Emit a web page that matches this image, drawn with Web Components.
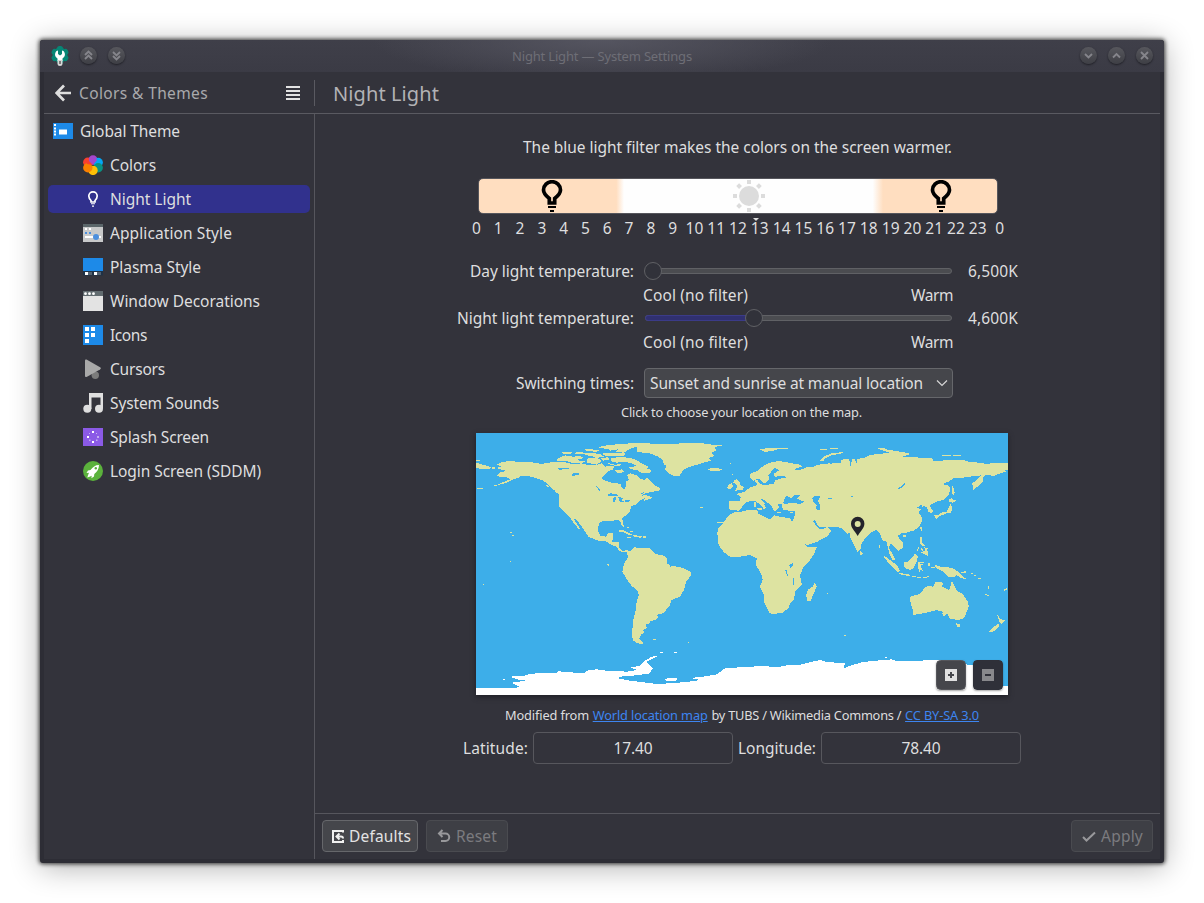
<!DOCTYPE html>
<html lang="en">
<head>
<meta charset="utf-8">
<title>Night Light — System Settings</title>
<style>
html,body{margin:0;background:#fff;height:100%;overflow:hidden}
body{font:15.5px/20px "Noto Sans",sans-serif;color:#dededf}
</style>
</head>
<body>
<settings-window></settings-window>
<script>
const shadow = (el, html) => { el.attachShadow({mode:'open'}).innerHTML = html; };

const ICONS = {
  theme:`<path fill="#1d8ae8" d="M0 2h20v16H0z"/><path fill="#fff" d="M1 3h2v2H1zM1 6.500h2v2H1zM1 9.500h2v2H1zM1 12.500h2v2H1zM6 8.500h8v5H6z"/>`,
  colors:`<circle cx="4.800" cy="7.300" r="4.700" fill="#f9402f"/><circle cx="10" cy="5" r="4.700" fill="#a546cc"/><circle cx="15.200" cy="7.500" r="4.700" fill="#04a6f5"/><circle cx="15.200" cy="12.800" r="4.700" fill="#089385"/><circle cx="10" cy="15.400" r="4.700" fill="#fec006"/><circle cx="4.800" cy="12.800" r="4.700" fill="#fb8100"/><path fill="#f9402f" d="M2 4l6-1 2 7-6-1z"/><path fill="#a546cc" d="M6 3h7l1 2-4 5-4-4z"/>`,
  bulb:`<path fill="none" stroke="#fff" stroke-width="1.700" d="M8 13v-1.500C6.500 10 5.800 9 5.800 7a4.200 4.200 0 0 1 8.400 0c0 2-.7 3-2.200 4.500V13z"/><path fill="#fff" d="M8 14.300h4v1H8zM9 16.500h2v1.200H9z"/>`,
  app:`<path fill="#c8c9ca" d="M0 1h20v18H0z"/><path fill="#5b666a" d="M0 1h20v3H0z"/><path fill="#fff" d="M2 5h2v2H2zM6 5h2v2H6zM2 13h16v2H2z"/><path fill="#4c8fdd" d="M2 9h2v2H2zM6 9h2v2H6z"/><circle cx="13" cy="14" r="3" fill="#4c8fdd"/>`,
  plasma:`<path fill="#1d8ae8" d="M0 1h20v13H0z"/><path fill="#1e3247" d="M0 14h20v4.500H0z"/><path fill="#fff" d="M2 15h3v3H2zM11 15h3v3h-3z"/><path fill="#53616f" d="M5 15h4v3H5zM14 15h4v3h-4z"/>`,
  deco:`<path fill="#e3e3e3" d="M0 0h20v20H0z"/><path fill="#626c70" d="M0 0h20v5H0z"/><circle cx="2.500" cy="2.700" r="1.400" fill="#fff"/><circle cx="6.500" cy="2.700" r="1.400" fill="#fff"/><circle cx="10.500" cy="2.700" r="1.400" fill="#fff"/>`,
  icons:`<path fill="#1d8ae8" d="M0 0h20v20H0z"/><path fill="#fff" d="M2 2h4v4H2zM8 2h4v4H8zM2 8h4v4H2zM8 8h4v4H8zM2 14h4v4H2z"/>`,
  cursor:`<circle cx="12.300" cy="16.300" r="3.700" fill="#7b7b7b"/><path fill="#a9a9a9" d="M2 1.500Q2 0 3.500 0.500L17.500 8.500Q18.500 9.500 17 10.500L4 17.800Q2 18.500 2 17z"/>`,
  music:`<path fill="#dfdfdf" d="M6 0h14v15.500h-2.500V4.500h-9V16H6z"/><circle cx="4.300" cy="15.700" r="4" fill="#dfdfdf"/><circle cx="16" cy="15.700" r="4" fill="#dfdfdf"/>`,
  splash:`<path fill="#8b5ae6" d="M0 1h20v18H0z"/><path fill="#fff" d="M9 4h2v2H9zM9 14h2v2H9zM4 9h2v2H4z"/><path fill="#c4acf2" d="M14 9h2v2h-2zM6 6h1v1H6zM13 6h1v1h-1zM6 12.500h1.500V14H6zM13 12.500h1.500V14H13z"/>`,
  login:`<circle cx="10" cy="10" r="10" fill="#5bb23c"/><path fill="#fff" d="M16 4c-4 0-6 2-8.500 5L5 9.500 3.500 12l2.500-.3-1 2.600-.7 2.200 2.200-.8 2.200-1-.3 2.600 2.600-1.700.3-2.600C14 11 16 8 16 4z"/><circle cx="12.800" cy="7.300" r="1.200" fill="#5bb23c"/>`
};

class SideItem extends HTMLElement{
  connectedCallback(){
    shadow(this,`<style>
    :host{display:flex;align-items:center;height:28px;margin:0 4px;padding-left:35px;border-radius:5px}
    :host([top]){padding-left:5px}
    :host([selected]){background:#31318d}
    svg{width:20px;height:20px;margin-right:7px;flex:none}
    </style><svg viewBox="0 0 20 20">${ICONS[this.getAttribute('icon')]}</svg><slot></slot>`);
  }
}

class RoundButton extends HTMLElement{
  connectedCallback(){
    const p={up2:'M5 8l3.500-3.500L12 8M5 12l3.500-3.500L12 12',down2:'M5 5l3.500 3.500L12 5M5 9l3.500 3.500L12 9',down:'M5 7l3.500 3.500L12 7',up:'M5 10.500L8.500 7l3.500 3.500',close:'M5 5l7 7M12 5l-7 7'}[this.getAttribute('glyph')];
    shadow(this,`<style>:host{display:block;width:17px;height:17px;border-radius:50%;background:linear-gradient(#57575d,#3e3f45);box-shadow:0 1px 2px #1e1e24}
    svg{display:block}</style><svg width="17" height="17"><path d="${p}" fill="none" stroke="#85858b" stroke-width="1.900"/></svg>`);
  }
}

class TitleBar extends HTMLElement{
  connectedCallback(){
    shadow(this,`<style>
    :host{display:grid;grid-template-columns:1fr auto 1fr;align-items:center;height:32px;background:radial-gradient(ellipse 230px 42px at 50% 0,#555560,rgba(85,85,96,0)),linear-gradient(#3f3f49,#3b3b45);font-size:13px;color:#6e6e76}
    .l,.r{display:flex;align-items:center;gap:11px}
    .l{padding-left:10px}.r{justify-content:flex-end;padding-right:11.500px}
    .l svg{margin-right:-1.500px}
    round-button{margin-top:-1px}
    </style><div class="l"><svg width="20" height="22" viewBox="0 0 20 22"><g fill="#078675"><circle cx="10" cy="10" r="7.500"/><rect x="7" y="1" width="6" height="18" rx="2.500"/><rect x="7" y="1" width="6" height="18" rx="2.500" transform="rotate(60 10 10)"/><rect x="7" y="1" width="6" height="18" rx="2.500" transform="rotate(120 10 10)"/></g><path fill="#fff" d="M6.500 6C4 9 5 12 7.500 13.500V16h5v-2.500C15 12 16 9 13.500 6L12 5.500V9l-2 1.500L8 9V5.500z"/><path fill="#d8d8d8" d="M7.500 15h5v4q0 2-2.500 2t-2.500-2z"/><path fill="#555" d="M9.300 16h1.400v3H9.300z"/></svg>
    <round-button glyph="up2"></round-button><round-button glyph="down2"></round-button></div>
    <fit-text w="180">Night Light — System Settings</fit-text>
    <div class="r"><round-button glyph="down"></round-button><round-button glyph="up"></round-button><round-button glyph="close"></round-button></div>`);
  }
}

class SideBar extends HTMLElement{
  connectedCallback(){
    shadow(this,`<style>
    :host{display:flex;flex-direction:column;gap:6px;padding-top:3px;width:270px;border-right:1px solid #56565d}
    </style>
    <side-item top icon="theme"><fit-text w="100">Global Theme</fit-text></side-item>
    <side-item icon="colors"><fit-text w="46">Colors</fit-text></side-item>
    <side-item selected icon="bulb"><fit-text w="81">Night Light</fit-text></side-item>
    <side-item icon="app"><fit-text w="122">Application Style</fit-text></side-item>
    <side-item icon="plasma"><fit-text w="91">Plasma Style</fit-text></side-item>
    <side-item icon="deco"><fit-text w="150">Window Decorations</fit-text></side-item>
    <side-item icon="icons"><fit-text w="37">Icons</fit-text></side-item>
    <side-item icon="cursor"><fit-text w="55">Cursors</fit-text></side-item>
    <side-item icon="music"><fit-text w="109">System Sounds</fit-text></side-item>
    <side-item icon="splash"><fit-text w="99">Splash Screen</fit-text></side-item>
    <side-item icon="login"><fit-text w="151">Login Screen (SDDM)</fit-text></side-item>`);
  }
}

class PageHeader extends HTMLElement{
  connectedCallback(){
    shadow(this,`<style>
    :host{display:flex;align-items:center;height:41px;border-bottom:1px solid #5a5a61;color:#a9a9ac}
    .a{margin:0 8px 0 11px}.m{margin-left:78px}
    .v{width:1px;height:26px;background:#5a5a61;margin:0 18px 0 14px}
    .t{font-size:20px;color:#b2b2b5;padding-top:2px}
    </style><svg class="a" width="16" height="18" fill="none" stroke="#dedede" stroke-width="2.700"><path d="M16 9H2M9 1.500L1.700 9 9 16.500"/></svg>
    <fit-text w="129">Colors &amp; Themes</fit-text>
    <svg class="m" width="14" height="14"><path fill="#e2e2e2" d="M0 0h14v2H0zM0 4h14v2H0zM0 8h14v2H0zM0 12h14v2H0z"/></svg>
    <span class="v"></span><fit-text class="t" w="106">Night Light</fit-text>`);
  }
}

class DayBar extends HTMLElement{
  connectedCallback(){
    const n=[...Array(24).keys(),0].map((k,i)=>`<span>${i==13?'<i></i>':''}<fit-text w="${k>9?18:9}">${k}</fit-text></span>`).join('');
    const bulb='<svg class="b" width="22" height="33" viewBox="0 0 22 33"><path fill="none" stroke="#000" stroke-width="3.700" d="M8.300 23v-4.500C4.500 15.500 2.500 13 2.500 10a8.500 8.300 0 0 1 17 0c0 3-2 5.500-5.800 8.500V23z"/><path d="M7 26h8v2H7zM9 30h4v2H9z"/></svg>';
    let sun='';for(let a=0;a<360;a+=45)sun+=`<rect x="14" y="0" width="4" height="4" transform="rotate(${a} 16 16)"/>`;
    shadow(this,`<style>
    :host{display:block;width:545px}
    .bar{box-sizing:border-box;height:36px;width:520px;margin-left:12px;border:1px solid #56565c;border-radius:5px;background:linear-gradient(90deg,#ffdec0 26.500%,#fefefe 28%,#fefefe 76%,#ffdec0 78%);display:grid;grid-template-columns:62px 23px 169px 32px 165px 22px;align-items:center}
    .nums{display:flex;margin:4px 0 1px -.4px}
    .nums span{width:21.800px;display:flex;justify-content:center;position:relative;flex:none}
    i{position:absolute;left:4px;top:0;border:3px solid transparent;border-top-color:#dedede;border-bottom:0}
    .b:first-child{grid-column:2}.s{grid-column:4;justify-self:center}.b:last-child{grid-column:6}
    </style><div class="bar">${bulb}<svg class="s" width="32" height="32" fill="#dcdcdc"><circle cx="16" cy="16" r="10"/>${sun}</svg>${bulb}</div><div class="nums">${n}</div>`);
  }
}

class TempSlider extends HTMLElement{
  connectedCallback(){
    const v=+this.getAttribute('pos');
    shadow(this,`<style>
    :host{display:block;width:309px}
    svg{display:block}
    .l{display:flex;justify-content:space-between;margin:4px 0 0 -1px;height:23px}
    </style><svg width="309" height="20"><rect x="1.500" y="7.500" width="306" height="5" rx="2.500" fill="#4b4c50" stroke="#606165"/>${v>20?`<rect x="1.500" y="7.500" width="${v-5}" height="5" rx="2.500" fill="#303070" stroke="#3b3b88"/>`:''}<circle cx="${v}" cy="10" r="8.500" fill="#31323a" stroke="#606165"/></svg>
    <div class="l"><fit-text w="105">Cool (no filter)</fit-text><fit-text w="42">Warm</fit-text></div>`);
  }
}

class ComboBox extends HTMLElement{
  connectedCallback(){
    shadow(this,`<style>:host{box-sizing:border-box;display:flex;align-items:center;justify-content:space-between;width:309px;height:30px;border:1px solid #66676b;border-radius:4px;background:#45464b;padding:0 4px 0 5px}</style><slot></slot><svg width="12" height="8" fill="none" stroke="#d6d6d6" stroke-width="1.200"><path d="M1 1.500l5 5 5-5"/></svg>`);
  }
}

class NumberField extends HTMLElement{
  connectedCallback(){
    shadow(this,`<style>:host{box-sizing:border-box;display:flex;align-items:center;justify-content:center;width:200px;height:32px;border:1px solid #57575d;border-radius:4px}</style><slot></slot>`);
  }
}

class WorldMap extends HTMLElement{
  connectedCallback(){
    shadow(this,`<style>
    :host{display:block;position:relative;width:532px;height:262px;box-shadow:0 2px 5px #1f1f26;background:#3daee9}
    svg{display:block}
    .z{position:absolute;right:5px;bottom:5px;display:flex;gap:7px}
    .z svg{border-radius:4px;box-shadow:0 1px 2px rgba(0,0,0,.35)}
    </style>
    <svg width="532" height="262" viewBox="0 0 532 262">
    <g fill="#dde3a1" shape-rendering="crispEdges">
     <g transform="translate(-6 -3) scale(.33333)">
      <path d="M80 104L90 98 110 94 125 92 140 96 165 95 185 97 215 102 235 98 262 96 285 97 310 103 330 101 350 104 378 106 395 100 405 110 420 108 432 107 430 118 415 123 402 135 396 143 400 150 425 158 440 160 452 162 455 172 462 178 468 170 468 155 476 150 472 135 480 130 500 136 510 145 525 151 530 142 545 157 558 168 568 172 570 181 555 184 540 187 525 190 515 197 530 195 534 199 548 200 540 207 522 212 524 205 511 210 500 222 483 230 480 245 465 258 456 265 460 280 461 290 455 287 450 272 435 270 430 273 410 272 390 276 385 290 384 305 392 318 408 320 414 310 430 310 430 325 425 335 446 336 448 355 455 362 465 362 474 358 474 366 460 367 448 362 438 350 420 342 405 332 385 332 355 320 348 308 335 290 322 272 310 264 318 278 332 298 325 296 312 280 300 262 285 248 270 234 267 225 268 195 258 184 245 175 232 160 215 150 195 143 175 138 155 137 148 142 130 148 105 160 80 166 100 156 120 148 110 142 95 142 80 138 88 128 104 124 104 120 88 118 80 114 95 110z"/>
      <path d="M18 98L35 103 62 111 60 118 35 118 18 112zM66 112h10v4H66zM18 90h12v3H18zM20 175h18v2H20zM72 166h10v2H72zM230 162l6 8-2 4-5-6zM255 184l20 6-2 4-8-2zM120 307h5v2h-5zM126 313l6 3-4 3zM120 393h3v2h-3zM412 402h5v6h-4z"/>
      <path d="M262 86L285 76 310 80 330 78 342 84 318 90 345 94 335 101 305 98 285 92 262 92zM275 67L305 66 310 70 280 72zM318 66L340 67 335 73 315 73zM345 58L355 56 390 62 378 66 350 62zM335 70L370 68 390 74 385 80 350 76zM350 86L380 82 395 93 380 104 352 98zM358 74L390 72 402 80 380 84zM390 50L410 46 450 42 500 39 540 40 540 46 505 50 485 54 475 60 462 68 435 66 445 58 420 62 415 56 385 55zM400 68L430 70 468 68 462 77 425 78 398 76zM392 84L415 82 420 88 400 92zM420 86L450 80 480 84 500 90 512 98 535 110 530 116 545 120 538 130 515 128 500 120 480 117 478 112 500 108 480 98 460 96 440 98 425 94zM410 98L435 104 455 102 448 108 425 106zM434 122L455 118 462 126 445 130zM500 52L540 50 540 68 520 66 500 58z"/>
      <path d="M446 301L460 300 490 315 480 316 462 307 448 305zM490 315L515 319 512 323 492 321zM472 320h10v3h-10zM518 319h10v4h-10zM472 292h4v3h-4zM480 302h8v3h-8z"/>
      <g fill="#3daee9"><path d="M265 115L295 113 298 117 268 119zM303 135L312 129 328 130 328 134 308 138zM378 167L388 176 390 183 384 178zM412 196L420 190 438 192 444 198 415 199zM429 203L438 202 435 216 430 216zM444 200L460 204 455 212 464 214 456 218 448 212zM464 210L480 209 478 214 464 217zM510 192L525 185 522 190z"/></g>
     </g>
     <g transform="translate(164 -3) scale(.33333)">
      <path d="M-10 56L0 46 30 42 80 42 130 40 190 40 230 46 250 46 225 51 228 62 215 68 222 78 205 84 212 92 195 97 165 106 140 114 128 122 118 138 105 139 85 130 75 118 80 108 72 104 68 90 55 80 30 70 -10 66z"/>
      <path d="M202 116L205 121 212 113 232 114 246 118 235 124 215 124zM282 150L290 148 298 154 300 164 312 172 308 180 285 182 292 172 288 162 280 158zM264 165L275 160 280 168 270 178 262 174zM276 132h3v3h-3zM270 99h3v3h-3zM180 231h8v2h-8zM232 277h18v3h-18zM358 58L385 54 420 55 400 62 375 66zM410 53h35v3h-35zM0 318h4v3H0zM10 321h6v3h-6z"/>
      <path d="M268 212L300 214 302 200 288 192 305 188 315 184 330 172 345 168 352 162 343 152 352 150 358 160 370 166 400 162 405 152 420 146 440 142 430 138 405 140 400 132 418 120 405 114 395 124 385 135 388 148 375 160 365 155 358 145 340 152 330 142 332 130 350 124 370 108 390 98 415 93 440 97 455 100 480 104 488 110 470 114 465 120 490 118 500 110 520 110 535 104 570 100 570 292 555 290 540 291 532 284 525 270 520 274 528 288 538 298 555 298 560 290 575 303 560 320 530 336 500 346 495 342 480 318 465 295 455 278 460 268 464 258 466 244 450 242 430 240 425 228 425 222 412 222 418 232 412 238 405 245 400 238 392 225 375 212 362 204 365 212 380 224 372 222 378 232 372 238 365 228 345 212 335 214 320 215 310 225 304 235 295 242 268 238zM352 235h15v6h-12zM343 216h5v14h-5zM412 247h12v3h-12zM450 246h10v3h-10z"/>
      <path d="M285 246L300 246 325 240 352 240 355 252 370 258 388 268 398 262 402 256 420 260 445 264 452 266 460 285 475 310 488 330 500 350 532 350 520 375 510 390 490 412 480 435 486 465 465 485 462 510 450 520 445 535 428 548 395 553 388 548 372 515 372 495 360 470 368 450 365 435 348 405 350 385 330 375 300 380 272 382 250 365 236 345 232 310 235 295 250 278 262 262 272 252z"/>
      <g fill="#3daee9"><path d="M430 220L432 208 440 198 455 204 465 195 480 196 470 205 492 215 480 222 455 218 440 222zM516 204L525 198 540 198 538 208 532 212 545 232 540 242 528 238 530 226 520 214zM448 404L458 400 460 408 450 414zM436 420h4l4 18h-3zM458 444h3l2 20h-3z"/></g>
     </g>
     <g transform="translate(344 -3) scale(.33333)">
      <path d="M0 102L30 102 50 98 65 100 62 90 85 85 90 98 92 112 96 86 105 88 110 100 112 86 130 85 150 75 185 71 220 67 235 73 250 80 262 82 280 82 335 84 342 94 385 90 430 90 445 95 475 98 500 102 530 98 564 100 564 120 550 119 558 124 520 138 500 134 488 142 490 155 470 172 460 181 457 160 470 150 484 136 450 140 430 143 400 145 385 155 368 162 388 168 392 180 385 195 370 210 350 215 336 222 330 228 340 245 335 250 325 245 322 234 315 229 305 230 307 223 290 233 305 239 295 246 305 262 305 275 298 290 280 302 258 308 245 310 232 318 240 328 250 340 250 352 235 362 222 348 212 341 207 350 212 370 225 388 220 390 208 372 203 350 200 335 188 332 180 312 168 300 150 310 135 325 125 340 122 358 112 366 104 350 92 325 88 308 82 311 75 306 65 295 50 291 28 292 0 290zM0 300L20 292 30 303 20 318 0 330z"/>
      <path d="M0 92L15 78 35 70 72 66 65 70 35 76 15 86 10 93zM170 54L195 55 205 60 230 63 268 70 266 76 240 78 215 70 190 62zM0 56h22v3H0zM30 54h24v3H30zM366 75h28v3h-28zM400 75h24v3h-24zM120 362l9 8-3 6-6-3zM250 316h8v5h-8zM301 292h5v10h-4zM345 262L342 256 355 254 362 248 380 246 387 232 392 220 397 236 393 248 385 248 372 254 360 258 350 266zM388 208L395 204 400 209 410 211 398 218 388 216zM396 166L400 172 404 188 398 200 397 185zM300 320L308 323 305 338 316 348 312 350 300 342zM302 352l6 4v6l-6-4zM312 352l12 2-6 8zM303 368l16-8 6 6v12l-8-4zM290 360l8-12 1 3-7 12zM190 378L204 384 232 414 238 424 230 424 205 398zM205 355L215 366 226 390 217 390zM250 398L262 396 285 372 294 380 290 395 280 415 270 420 255 415zM178 345h2v10h-2zM293 397h20v3h-20z"/>
      <path fill="#3daee9" d="M233 175L244 170 255 158 253 166 243 174 235 178zM93 200L98 198 100 201 95 203zM25 203h12v5H25z"/>
     </g>
     <g transform="translate(-6 127) scale(.33333)">
      <path d="M470 -24L482 -28 495 -40 500 -36 515 -35 540 -36 555 -18 582 -13 590 -5 590 10 598 12 600 20 612 18 640 24 662 36 662 48 648 66 642 90 630 110 605 120 600 135 580 160 565 163 558 165 565 172 560 178 540 184 540 190 528 192 530 205 520 210 522 218 515 222 508 236 520 250 512 253 500 248 490 242 486 230 485 210 490 200 490 180 497 150 500 125 506 105 503 92 485 78 475 65 465 48 457 35 460 20 465 5 470 0 474 -10zM548 236h10v4h-10zM652 246l8 2-2 3zM38 72h3v3h-3z"/>
      <path fill="#fff" d="M18 405V384H115L150 382 140 376 125 368 170 362 140 358 120 350 165 347 180 342 220 338 260 339 266 334 290 336 340 340 352 332 380 328 410 332 470 335 500 330 482 322 510 318 520 305 545 290 565 287 530 305 548 325 540 340 500 346 450 350 446 355 480 362 560 372 600 370 650 366 690 360 660 354 700 350 740 343 765 325 810 322 860 319 930 320 960 314 990 314 1050 300 1070 306 1125 310 1120 325 1150 314 1180 306 1240 300 1310 303 1410 300 1450 308 1510 316 1590 320 1596 377 1615 377V405zM585 358L600 353 622 355 618 362 590 362zM95 356l12 2-4 3zM570 277h10v3h-10zM612 276h8v2h-8z"/>
      <path fill="#3daee9" d="M470 348h28v3h-28zM485 358L530 360 540 365 500 362z"/>
     </g>
     <g transform="translate(264 127) scale(.33333)">
      <path d="M225 68L230 80 218 108 212 122 202 122 198 105 205 88 218 80zM510 110L540 102 555 82 570 76 578 82 588 65 610 68 605 80 628 90 636 62 645 80 650 92 668 102 685 128 686 140 672 175 655 180 630 176 622 160 612 168 607 155 590 150 560 158 520 165 518 150 512 130zM648 190L662 192 658 202 652 200zM770 162L782 178 797 180 785 192 778 184zM775 190L778 198 760 215 745 215 760 202z"/>
      <path d="M583 14L595 18 608 22 620 20 640 26 655 36 670 52 680 57 665 55 650 45 640 52 625 50 612 36 590 26zM660 38L675 34 680 30 676 40zM440 0L450 0 470 15 480 32 474 36 455 18zM475 39L505 42 512 48 485 45zM515 48h12v3h-12zM530 50h14v3h-14zM548 52L568 48 558 56zM535 10L552 12 542 17 548 32 542 30 538 36 535 24zM565 8h4v10h-4zM573 21h12v3h-12zM692 38h6v3h-6zM702 45h6v3h-6zM714 54h8v3h-8zM744 78h4v8h-4zM735 102h5v3h-5zM742 105h6v3h-6zM792 88l10-4v4l-8 5zM312 225h5v2h-5zM262 98h3v3h-3zM606 158l6 4-1 8z"/>
      <path fill="#fff" d="M436 291h5v3h-5zM450 297h5v3h-5z"/>
     </g>
    </g>
    <path fill="#24242b" fill-rule="evenodd" d="M381.700 103C378 96.500 375 95 375 90.500a6.700 6.700 0 0 1 13.400 0C388.400 95 385.500 96.500 381.700 103zM381.700 88a3 3 0 1 0 .01 6 3 3 0 0 0 -.01-6z"/>
    </svg>
    <div class="z"><svg width="30" height="30"><rect x=".5" y=".5" width="29" height="29" rx="4" fill="#45464b" stroke="#55565b"/><path fill="#e0e0e0" d="M9 9h12v12H9z"/><path stroke="#45464b" stroke-width="2" d="M12 15h6M15 12v6"/></svg><svg width="30" height="30"><rect width="30" height="30" rx="4" fill="#2f3039"/><path fill="#88888c" d="M9 9h12v12H9z"/><path stroke="#2f3039" stroke-width="2" d="M12 15h6"/></svg></div>`);
  }
}

class PushButton extends HTMLElement{
  connectedCallback(){
    const p={defaults:'<path d="M12 3.500V2H2v11h10v-2"/><path d="M5.500 7.500H10q2 0 2 2M8.500 4.500l-3 3 3 3"/>',reset:'<path d="M2 4.500h6.500a3.700 3.700 0 0 1 0 7.500H4M5.500 1L2 4.500 5.500 8"/>',apply:'<path d="M1 8l3.500 3.500L13 3.500"/>'}[this.getAttribute('icon')];
    shadow(this,`<style>:host{box-sizing:border-box;display:flex;align-items:center;height:32px;border:1px solid #66676b;border-radius:4px;background:#45464b;padding-left:8px;color:#e3e3e3}
    :host([disabled]){background:#3e3f45;border-color:#4a4b50;color:#7b7b7f;padding-left:10px}
    svg{margin-right:4px;flex:none}
    :host([disabled]) svg{margin-right:5px}
    </style><svg width="14" height="14" fill="none" stroke="${this.hasAttribute('disabled')?'#98989b':'#f0f0f0'}" stroke-width="2">${p}</svg><slot></slot>`);
  }
}

class NightLightPage extends HTMLElement{
  connectedCallback(){
    shadow(this,`<style>
    :host{display:flex;flex-direction:column;flex:1;min-width:0}
    .body{height:699px;display:flex;flex-direction:column}
    .intro{margin:23px 0 0 208px}
    day-bar{margin:21px 0 0 151px}
    .form{display:grid;grid-template-columns:319px 309px auto;column-gap:10px;margin-top:22px;align-items:start}
    .form>.lb{justify-self:end}
    .form>.val{margin-left:5px}
    .form>combo-box{margin-top:13px}
    .form>.sw{margin-top:18px}
    .small{font-size:12.800px}
    .hint{margin:4px 0 0 306px}
    world-map{margin:11px 0 0 161px}
    .attr{display:flex;margin:10px 0 0 190px;gap:3.700px;height:20px}
    a{color:#3d85f0}
    a fit-text{text-decoration:underline}
    .loc{display:flex;align-items:center;gap:5px;margin:7px 0 0 148px}
    .foot{display:flex;gap:8px;border-top:1px solid #56565d;padding:6px 7px 0}
    .foot>:last-child{margin-left:auto}
    .d{width:96px}.w{width:82px}
    </style>
    <div class="body">
     <fit-text class="intro" w="429">The blue light filter makes the colors on the screen warmer.</fit-text>
     <day-bar></day-bar>
     <div class="form">
      <fit-text class="lb" w="164">Day light temperature:</fit-text><temp-slider pos="9"></temp-slider><fit-text class="val" w="50">6,500K</fit-text>
      <fit-text class="lb" w="177">Night light temperature:</fit-text><temp-slider pos="110"></temp-slider><fit-text class="val" w="50">4,600K</fit-text>
      <fit-text class="lb sw" w="118">Switching times:</fit-text><combo-box><fit-text w="273">Sunset and sunrise at manual location</fit-text></combo-box>
     </div>
     <fit-text class="small hint" w="241">Click to choose your location on the map.</fit-text>
     <world-map></world-map>
     <div class="attr small"><fit-text w="84">Modified from</fit-text><a><fit-text w="115">World location map</fit-text></a><fit-text w="190">by TUBS / Wikimedia Commons /</fit-text><a><fit-text w="74">CC BY-SA 3.0</fit-text></a></div>
     <div class="loc"><fit-text w="65">Latitude:</fit-text><number-field><fit-text w="39">17.40</fit-text></number-field><fit-text w="78">Longitude:</fit-text><number-field><fit-text w="39">78.40</fit-text></number-field></div>
    </div>
    <div class="foot"><push-button class="d" icon="defaults"><fit-text w="62">Defaults</fit-text></push-button><push-button class="w" disabled icon="reset"><fit-text w="41">Reset</fit-text></push-button><push-button class="w" disabled icon="apply"><fit-text w="42">Apply</fit-text></push-button></div>`);
  }
}

class SettingsWindow extends HTMLElement{
  connectedCallback(){
    shadow(this,`<style>
    :host{display:block;box-sizing:border-box;width:1124px;height:823px;margin:40px;background:#2d2d35;box-shadow:0 0 4px 1px rgba(0,0,0,.75),0 4px 30px rgba(0,0,0,.32);border-radius:3px;overflow:hidden}
    .in{margin:0 4px;height:787px;background:#33333b;display:flex;flex-direction:column}
    .row{display:flex;flex:1;min-height:0}
    </style><title-bar></title-bar><div class="in"><page-header></page-header><div class="row"><side-bar></side-bar><night-light-page></night-light-page></div></div>`);
  }
}

/* Text run set to an exact advance width through its letter spacing. */
class FitText extends HTMLElement{
  connectedCallback(){
    const w=+this.getAttribute('w');
    shadow(this,`<style>:host{display:inline-block;width:${w}px;flex:none;white-space:nowrap}span{display:inline-block;text-decoration:inherit}</style><span><slot></slot></span>`);
    const s=this.shadowRoot.querySelector('span'),n=this.textContent.length;
    s.style.letterSpacing=((w-s.getBoundingClientRect().width)/n)+'px';
  }
}

for(const [n,c] of Object.entries({'settings-window':SettingsWindow,'title-bar':TitleBar,'round-button':RoundButton,'page-header':PageHeader,'side-bar':SideBar,'side-item':SideItem,'night-light-page':NightLightPage,'day-bar':DayBar,'temp-slider':TempSlider,'combo-box':ComboBox,'number-field':NumberField,'world-map':WorldMap,'push-button':PushButton,'fit-text':FitText})) customElements.define(n,c);
</script>
</body>
</html>
